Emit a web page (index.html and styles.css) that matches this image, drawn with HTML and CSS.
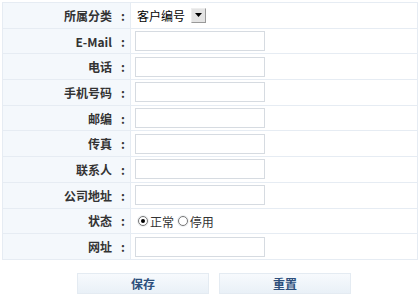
FILE: index.html
```html
<!DOCTYPE html>
<html lang="zh-cn">
<head>
  <meta charset="UTF-8">
  <title>客户信息</title>
  <link rel="stylesheet" href="styles.css">
</head>
<body>
  <table class="form-table">
    <tr>
      <th>所属分类<span class="colon">:</span></th>
      <td>
        <span class="select-box">客户编号<span class="select-arrow"><svg width="7" height="4" viewBox="0 0 7 4"><path d="M0 0H7L3.5 4Z" fill="#000"/></svg></span></span>
      </td>
    </tr>
    <tr><th>E-Mail<span class="colon">:</span></th><td><input type="text" class="text-input"></td></tr>
    <tr><th>电话<span class="colon">:</span></th><td><input type="text" class="text-input"></td></tr>
    <tr><th>手机号码<span class="colon">:</span></th><td><input type="text" class="text-input"></td></tr>
    <tr><th>邮编<span class="colon">:</span></th><td><input type="text" class="text-input"></td></tr>
    <tr><th>传真<span class="colon">:</span></th><td><input type="text" class="text-input"></td></tr>
    <tr><th>联系人<span class="colon">:</span></th><td><input type="text" class="text-input"></td></tr>
    <tr><th>公司地址<span class="colon">:</span></th><td><input type="text" class="text-input"></td></tr>
    <tr>
      <th>状态<span class="colon">:</span></th>
      <td>
        <label class="radio"><span class="radio-dot checked"></span>正常</label>
        <label class="radio"><span class="radio-dot"></span>停用</label>
      </td>
    </tr>
    <tr><th>网址<span class="colon">:</span></th><td><input type="text" class="text-input"></td></tr>
  </table>

  <div class="actions">
    <button class="btn">保存</button>
    <button class="btn">重置</button>
  </div>
</body>
</html>
```

FILE: styles.css
```css
body {
  margin: 0;
  padding: 2px 2px 0 2px;
  font-family: "Noto Sans CJK SC", "DejaVu Sans", sans-serif;
  font-size: 12px;
  color: #333;
  background: #fff;
}
.form-table {
  width: 416px;
  border-collapse: collapse;
  border: 1px solid #e1e8f0;
}
.form-table th,
.form-table td {
  height: 24.7px;
  padding: 0;
  border: 1px solid #e6ecf3;
}
.form-table th {
  width: 122px;
  padding-right: 5px;
  text-align: right;
  font-weight: bold;
  color: #333;
  background-color: #f4f8fc;
}
.colon {
  display: inline-block;
  width: 13px;
  text-align: right;
}
.form-table td {
  padding-left: 4px;
}
.text-input {
  display: block;
  width: 130px;
  height: 20px;
  box-sizing: border-box;
  margin: 0;
  border: 1px solid #d6dbe1;
  background: #fff;
}
.select-box {
  display: inline-flex;
  align-items: center;
  gap: 6px;
  height: 20px;
  padding-left: 2px;
  font-size: 12px;
  color: #000;
}
.select-arrow {
  display: inline-flex;
  align-items: center;
  justify-content: center;
  width: 15px;
  height: 15px;
  box-sizing: border-box;
  background: #e4e4e4;
  border: 1px solid #999;
  border-top-color: #eee;
  border-left-color: #eee;
}
.radio {
  display: inline-flex;
  align-items: center;
  gap: 2px;
  margin-left: 3px;
  color: #333;
}
.radio + .radio {
  margin-left: 1px;
}
.radio-dot {
  width: 10px;
  height: 10px;
  border-radius: 50%;
  border: 1px solid #777;
  box-sizing: border-box;
  position: relative;
  background: #fff;
  box-shadow: 0 0 0 1px #eef0f2;
}
.radio-dot.checked::after {
  content: "";
  position: absolute;
  left: 2px;
  top: 2px;
  width: 4px;
  height: 4px;
  border-radius: 50%;
  background: #000;
}
.actions {
  display: flex;
  gap: 10px;
  padding: 13px 0 0 75px;
}
.btn {
  width: 132px;
  height: 21px;
  padding: 0;
  font-family: "Noto Sans CJK SC", serif;
  font-size: 12px;
  font-weight: bold;
  color: #2d4f7c;
  border: 1px solid #e4ebf2;
  border-radius: 0;
  background: linear-gradient(#f7fafd, #e9f0f7);
  cursor: pointer;
}
```
